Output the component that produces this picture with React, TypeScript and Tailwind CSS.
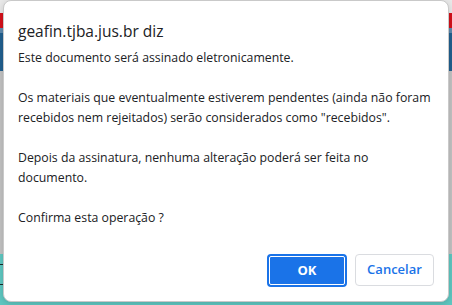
import React from "react";

const message =
  "Este documento será assinado eletronicamente.\n\nOs materiais que eventualmente estiverem pendentes (ainda não foram recebidos nem rejeitados) serão considerados como \"recebidos\".\n\nDepois da assinatura, nenhuma alteração poderá ser feita no documento.\n\nConfirma esta operação ?";

function BackgroundPage() {
  return (
    <div className="flex h-[305px] w-[452px] flex-col bg-[#c4c4c4]">
      <div className="h-[13px] bg-[#e8e8e8]" />
      <div className="h-[15px] bg-[#d4101a]" />
      <div className="h-[5px] bg-[#5d89ad]" />
      <div className="h-[38px] bg-[#215f8e]" />
      <div className="flex-1 bg-[#c2c2c2]" />
      <div className="flex h-[51px] flex-col bg-[#5ec7c1]">
        <div className="mt-[10px] h-px w-[3px] bg-[#1d2b2b]" />
        <div className="mt-[19px] h-px w-[3px] bg-[#1d2b2b]" />
      </div>
    </div>
  );
}

export default function App() {
  return (
    <div
      className="relative h-[305px] w-[452px] overflow-hidden"
      style={{ fontFamily: '"Open Sans", "Noto Sans", sans-serif' }}
    >
      <BackgroundPage />
      <div className="absolute left-[3px] top-0 flex h-[302px] w-[446px] flex-col rounded-[8px] border border-[#c9c9c9] bg-white shadow-[0_2px_6px_rgba(0,0,0,0.15)]">
        <div className="pl-[14px] pr-[10px] pt-[19px]">
          <div className="text-[15.5px] leading-[22px] text-[#202124]">geafin.tjba.jus.br diz</div>
          <div className="mt-[6px] whitespace-pre-wrap text-[12.3px] leading-[20px] text-[#202124]">
            {message}
          </div>
        </div>
        <div className="mt-auto flex justify-end gap-[8px] pb-[14px] pr-[14px]">
          <button className="h-[33px] w-[80px] rounded-[4px] border-2 border-[#1a73e8] bg-[#1a73e8] text-[13px] font-bold text-white outline outline-1 -outline-offset-[3px] outline-white">
            OK
          </button>
          <button className="h-[32px] w-[79px] rounded-[4px] border border-[#dadce0] bg-white text-[13px] font-semibold text-[#1a73e8]">
            Cancelar
          </button>
        </div>
      </div>
    </div>
  );
}
